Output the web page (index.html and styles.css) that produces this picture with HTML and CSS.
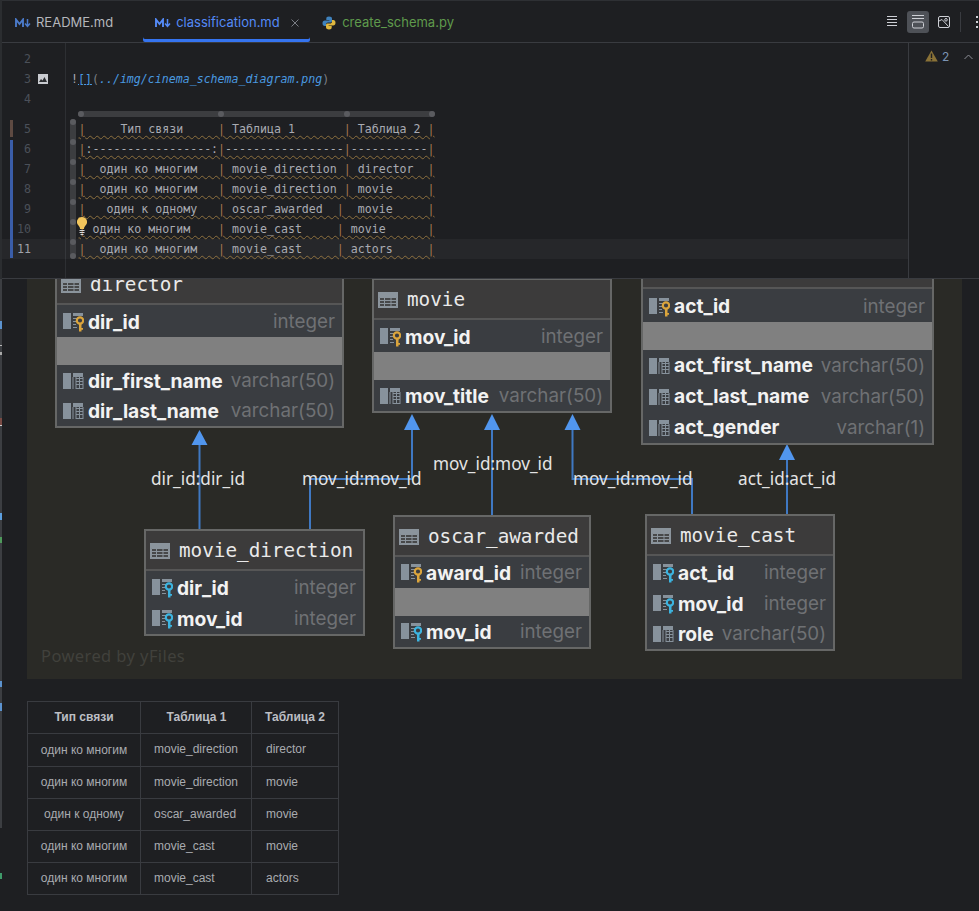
FILE: index.html
```html
<!DOCTYPE html>
<html lang="ru">
<head>
<meta charset="utf-8">
<title>classification.md</title>
<link rel="stylesheet" href="styles.css">
</head>
<body>
<svg class="defs" width="0" height="0" aria-hidden="true">
  <symbol id="i-md" viewBox="0 0 16 10">
    <path d="M1 9V1.500L4.500 6 8 1.500V9" fill="none" stroke="currentColor" stroke-width="1.900"/>
    <path d="M12.500 1v7M10 5.600l2.500 2.800L15 5.600" fill="none" stroke="currentColor" stroke-width="1.500"/>
  </symbol>
  <symbol id="i-table" viewBox="0 0 20 16">
    <rect width="20" height="16" fill="#8b949c"/>
    <path d="M1.500 5.500h17v9h-17zM1.500 8.500h17M1.500 11.500h17M6.500 5.500v9M13 5.500v9" fill="#3c3b3b" stroke="#8b949c" stroke-width="1" opacity=".85"/>
  </symbol>
  <symbol id="i-col" viewBox="0 0 21 17">
    <rect width="8" height="16" y="0" fill="#87929c"/>
    <path d="M10 0h10v4H10z" fill="#87929c"/>
    <path d="M13 5.500h7M13 8.500h7M13 11.500h7M13 15.500h7M13 4v12M16.500 4v12M20 4v12" stroke="#87929c" fill="none"/>
    <path d="M10 4v12" stroke="#87929c"/>
  </symbol>
  <symbol id="i-colkey" viewBox="0 0 21 19">
    <rect width="8" height="16" y="0" fill="#87929c"/>
    <path d="M10 0h10v3H10z" fill="#87929c"/>
    <path d="M10 5.500h4M10 8.500h3M10 11.500h3M10 14.500h4" stroke="#87929c" fill="none"/>
    <circle cx="17" cy="7.500" r="3.200" fill="none" stroke="currentColor" stroke-width="2.200"/>
    <path d="M16 10v8.500h2.500V16.800H20V15h-1.500v-5z" fill="currentColor"/>
  </symbol>
</svg>

<div class="app">
  <aside class="rail">
    <i class="tick tick-a"></i><i class="tick tick-b"></i><i class="tick tick-c"></i><i class="tick tick-d"></i>
    <i class="tick tick-e"></i><i class="tick tick-f"></i><i class="tick tick-g"></i><i class="tick tick-h"></i>
    <i class="tick tick-i"></i><i class="tick tick-j"></i>
  </aside>

  <main class="main">
    <header class="tabs">
      <div class="tab tab-reserve">
        <svg class="md-icon" width="16" height="10"><use href="#i-md"/></svg>
        <span>README.md</span>
      </div>
      <div class="tab tab-active">
        <svg class="md-icon" width="16" height="10"><use href="#i-md"/></svg>
        <span>classification.md</span>
        <svg class="close" width="8" height="8" viewBox="0 0 8 8"><path d="M.5.5l7 7M7.500.5l-7 7" stroke="#7a7d84" fill="none"/></svg>
      </div>
      <div class="tab tab-py">
        <svg width="14" height="14" viewBox="0 0 14 14">
          <path d="M7 .5C4.500.5 4.300 1.500 4.300 2.700V4H7.400v.6H2.800C1.400 4.600.5 5.500.5 7.200s.9 2.700 2.200 2.700H4V8.300c0-1.100.9-1.900 2-1.900h2.500c1 0 1.500-.7 1.500-1.600V2.700C10 1.400 9 .5 7 .5z" fill="#3f82bd"/>
          <path d="M7 13.500c2.500 0 2.700-1 2.700-2.200V10H6.600v-.6h4.600c1.400 0 2.300-.9 2.300-2.600s-.9-2.700-2.200-2.700H10v1.600c0 1.100-.9 1.900-2 1.900H5.500c-1 0-1.500.7-1.500 1.600v2.100c0 1.300 1 2.200 3 2.200z" fill="#e0b83f"/>
        </svg>
        <span>create_schema.py</span>
      </div>
      <div class="tools">
        <button class="tool" type="button" aria-label="Editor">
          <svg width="12" height="11" viewBox="0 0 12 11"><path d="M1 .5h10M1 3.500h10M1 6.500h10M1 9.500h10" stroke="#ced0d6" fill="none"/></svg>
        </button>
        <button class="tool tool-on" type="button" aria-label="Editor and preview">
          <svg width="14" height="14" viewBox="0 0 14 14"><path d="M1 .5h12M1 3.500h12" stroke="#ced0d6" fill="none"/><rect x="1.500" y="7" width="11" height="6" rx="1.500" fill="none" stroke="#ced0d6"/></svg>
        </button>
        <button class="tool" type="button" aria-label="Preview">
          <svg width="12" height="12" viewBox="0 0 12 12"><rect x=".5" y=".5" width="11" height="11" rx="1.500" fill="none" stroke="#ced0d6"/><circle cx="8" cy="3.800" r="1.300" fill="none" stroke="#ced0d6"/><path d="M1 5l3-1.500 6.500 7" fill="none" stroke="#ced0d6"/></svg>
        </button>
        <span class="tool-sep"></span>
        <svg class="dots" width="3" height="12" viewBox="0 0 3 12"><path d="M0 0h2v2H0zM0 5h2v2H0zM0 10h2v2H0z" fill="#ced0d6"/></svg>
      </div>
    </header>

    <section class="editor">
      <div class="code">
        <div class="line"><span class="num">2</span></div>
        <div class="line">
          <span class="num">3</span>
          <svg class="thumb" width="10" height="10" viewBox="0 0 10 10"><rect width="10" height="10" fill="#c9cbd0"/><path d="M1 8l2-3 1.500 1.500L6.500 3 9 8z" fill="#2b2d30"/></svg>
          <span class="src">!<span class="link">[]</span><span class="par">(</span><em class="url">../img/cinema_schema_diagram.png</em><span class="par">)</span></span>
        </div>
        <div class="line"><span class="num">4</span></div>
        <div class="inlay-gap">
          <div class="hbar">
            <i class="knob"></i><i class="knob knob-2"></i><i class="knob knob-3"></i><i class="knob knob-4"></i>
          </div>
        </div>
        <div class="line"><span class="num">5</span><span class="src tbl"><u><b>|</b>     Тип связи     <b>|</b> Таблица 1       <b>|</b> Таблица 2 <b>|</b></u></span></div>
        <div class="line"><span class="num">6</span><span class="src tbl"><u><b>|</b>:-----------------:<b>|</b>-----------------<b>|</b>-----------<b>|</b></u></span></div>
        <div class="line"><span class="num">7</span><span class="src tbl"><u><b>|</b>  один ко многим   <b>|</b> movie_direction <b>|</b> director  <b>|</b></u></span></div>
        <div class="line"><span class="num">8</span><span class="src tbl"><u><b>|</b>  один ко многим   <b>|</b> movie_direction <b>|</b> movie     <b>|</b></u></span></div>
        <div class="line"><span class="num">9</span><span class="src tbl"><u><b>|</b>   один к одному   <b>|</b> oscar_awarded  <b>|</b>  movie     <b>|</b></u></span></div>
        <div class="line"><span class="num">10</span><span class="src tbl"><u><b>|</b> один ко многим    <b>|</b> movie_cast     <b>|</b> movie      <b>|</b></u></span></div>
        <div class="line line-current"><span class="num">11</span><span class="src tbl"><u><b>|</b>  один ко многим   <b>|</b> movie_cast     <b>|</b> actors     <b>|</b></u></span></div>

        <div class="mark mark-mod"></div>
        <div class="mark mark-new"></div>
        <div class="vbar">
          <i class="vknob vk1"></i><i class="vknob vk2"></i><i class="vknob vk3"></i><i class="vknob vk4"></i>
          <i class="vknob vk5"></i><i class="vknob vk6"></i><i class="vknob vk7"></i><i class="vknob vk8"></i>
        </div>
        <svg class="bulb" width="10" height="19" viewBox="0 0 10 19">
          <path d="M5 0a5 5 0 0 0-3.500 8.600C2.600 9.800 3 11 3 12h4c0-1 .4-2.200 1.500-3.400A5 5 0 0 0 5 0z" fill="#f2c55c"/>
          <path d="M2.500 13.500h5M2.500 15.500h5M3.500 17.500h3" stroke="#d8d8d8" fill="none"/>
        </svg>
      </div>
      <aside class="inspect">
        <svg width="13" height="12" viewBox="0 0 13 12"><path d="M6.500.5L12.800 11.500H.2z" fill="#8a7237"/><path d="M5.800 3.500h1.400v4.500H5.800zM5.800 9h1.400v1.400H5.800z" fill="#1e1f22"/></svg>
        <span class="count">2</span>
        <svg class="chev" width="9" height="6" viewBox="0 0 9 6"><path d="M.5 5L4.500 1l4 4" fill="none" stroke="#8c8f96"/></svg>
      </aside>
    </section>

    <section class="preview">
      <div class="diagram">
        <svg class="edges" width="935" height="400" viewBox="0 0 935 400">
          <path d="M172.500 165V250M385 150V200H283V250M465 150V236M545.500 150V200H665V235M760 180V235" fill="none" stroke="#3f78c2" stroke-width="2"/>
          <path d="M172.500 151l8 15h-16zM385 135l8 16h-16zM465 135l8 16h-16zM545.500 135l8 16h-16zM760 165l8 16h-16z" fill="#5196ee"/>
        </svg>

        <span class="edge-label l-dir">dir_id:dir_id</span>
        <span class="edge-label l-mov1">mov_id:mov_id</span>
        <span class="edge-label l-mov2">mov_id:mov_id</span>
        <span class="edge-label l-mov3">mov_id:mov_id</span>
        <span class="edge-label l-act">act_id:act_id</span>

        <article class="node n-director">
          <div class="head"><svg width="20" height="16"><use href="#i-table"/></svg><span>director</span></div>
          <div class="rows">
            <div class="row"><svg class="gold" width="21" height="19"><use href="#i-colkey"/></svg><strong>dir_id</strong><span>integer</span></div>
          </div>
          <div class="gap"></div>
          <div class="rows">
            <div class="row"><svg width="21" height="17"><use href="#i-col"/></svg><strong>dir_first_name</strong><span>varchar(50)</span></div>
            <div class="row"><svg width="21" height="17"><use href="#i-col"/></svg><strong>dir_last_name</strong><span>varchar(50)</span></div>
          </div>
        </article>

        <article class="node n-movie">
          <div class="head"><svg width="20" height="16"><use href="#i-table"/></svg><span>movie</span></div>
          <div class="rows">
            <div class="row"><svg class="gold" width="21" height="19"><use href="#i-colkey"/></svg><strong>mov_id</strong><span>integer</span></div>
          </div>
          <div class="gap"></div>
          <div class="rows">
            <div class="row"><svg width="21" height="17"><use href="#i-col"/></svg><strong>mov_title</strong><span>varchar(50)</span></div>
          </div>
        </article>

        <article class="node n-actors">
          <div class="head"></div>
          <div class="rows">
            <div class="row"><svg class="gold" width="21" height="19"><use href="#i-colkey"/></svg><strong>act_id</strong><span>integer</span></div>
          </div>
          <div class="gap"></div>
          <div class="rows">
            <div class="row"><svg width="21" height="17"><use href="#i-col"/></svg><strong>act_first_name</strong><span>varchar(50)</span></div>
            <div class="row"><svg width="21" height="17"><use href="#i-col"/></svg><strong>act_last_name</strong><span>varchar(50)</span></div>
            <div class="row"><svg width="21" height="17"><use href="#i-col"/></svg><strong>act_gender</strong><span>varchar(1)</span></div>
          </div>
        </article>

        <article class="node n-direction">
          <div class="head"><svg width="20" height="16"><use href="#i-table"/></svg><span>movie_direction</span></div>
          <div class="rows">
            <div class="row"><svg class="cyan" width="21" height="19"><use href="#i-colkey"/></svg><strong>dir_id</strong><span>integer</span></div>
            <div class="row"><svg class="cyan" width="21" height="19"><use href="#i-colkey"/></svg><strong>mov_id</strong><span>integer</span></div>
          </div>
        </article>

        <article class="node n-oscar">
          <div class="head"><svg width="20" height="16"><use href="#i-table"/></svg><span>oscar_awarded</span></div>
          <div class="rows">
            <div class="row"><svg class="gold" width="21" height="19"><use href="#i-colkey"/></svg><strong>award_id</strong><span>integer</span></div>
          </div>
          <div class="gap"></div>
          <div class="rows">
            <div class="row"><svg class="cyan" width="21" height="19"><use href="#i-colkey"/></svg><strong>mov_id</strong><span>integer</span></div>
          </div>
        </article>

        <article class="node n-cast">
          <div class="head"><svg width="20" height="16"><use href="#i-table"/></svg><span>movie_cast</span></div>
          <div class="rows">
            <div class="row"><svg class="cyan" width="21" height="19"><use href="#i-colkey"/></svg><strong>act_id</strong><span>integer</span></div>
            <div class="row"><svg class="cyan" width="21" height="19"><use href="#i-colkey"/></svg><strong>mov_id</strong><span>integer</span></div>
            <div class="row"><svg width="21" height="17"><use href="#i-col"/></svg><strong>role</strong><span>varchar(50)</span></div>
          </div>
        </article>

        <span class="powered">Powered by yFiles</span>
      </div>

      <table class="rel">
        <thead>
          <tr><th>Тип связи</th><th>Таблица 1</th><th>Таблица 2</th></tr>
        </thead>
        <tbody>
          <tr class="tall"><td>один ко многим</td><td>movie_direction</td><td>director</td></tr>
          <tr><td>один ко многим</td><td>movie_direction</td><td>movie</td></tr>
          <tr><td>один к одному</td><td>oscar_awarded</td><td>movie</td></tr>
          <tr><td>один ко многим</td><td>movie_cast</td><td>movie</td></tr>
          <tr><td>один ко многим</td><td>movie_cast</td><td>actors</td></tr>
        </tbody>
      </table>
    </section>
  </main>
</div>
</body>
</html>
```

FILE: styles.css
```css
* { box-sizing: border-box; }

html, body {
  margin: 0;
  height: 911px;
  overflow: hidden;
  background: #1e1f22;
}

.defs { position: absolute; }

.app {
  display: flex;
  height: 911px;
  width: 979px;
  overflow: hidden;
}

/* left rail sliver */
.rail {
  position: relative;
  flex: none;
  width: 2px;
  background: linear-gradient(#2b2d30 0 279px, #3c3e42 279px 828px, #1e1f22 828px);
}
.tick { position: absolute; left: 0; width: 2px; display: block; }
.tick-a { top: 321px; height: 8px; background: #5c93cf; }
.tick-b { top: 345px; height: 1px; background: #b8b8b8; }
.tick-c { top: 352px; height: 3px; background: #a9a9a9; }
.tick-d { top: 418px; height: 7px; background: #7a4a44; }
.tick-e { top: 425px; height: 1px; background: #d0d0d0; }
.tick-f { top: 513px; height: 7px; background: #5c9fe0; }
.tick-g { top: 537px; height: 6px; background: #4f9a5c; }
.tick-h { top: 681px; height: 6px; background: #5c93cf; }
.tick-i { top: 703px; height: 8px; background: #5c93cf; }
.tick-j { top: 873px; height: 6px; background: #3f9a6a; }

.main {
  flex: 1;
  min-width: 0;
  display: flex;
  flex-direction: column;
}

/* tabs */
.tabs {
  display: flex;
  align-items: stretch;
  height: 43px;
  flex: none;
  padding-left: 1px;
  border-top: 1px solid #2e3034;
  border-bottom: 1px solid #393b40;
  font: 13px/1 Inter, "Liberation Sans", sans-serif;
  color: #b4b6bc;
}
.tab {
  display: flex;
  align-items: center;
  gap: 5px;
  padding: 2px 12px 0;
  white-space: nowrap;
}
.tab-reserve { margin-right: 18px; }
.md-icon { color: #4b7ac9; flex: none; }
.tab-active {
  color: #548af7;
  width: 167px;
  box-shadow: inset 0 -3px 0 #3574f0;
  border-radius: 0 0 2px 2px;
}
.tab-active .md-icon { color: #548af7; }
.close { margin-left: 6px; flex: none; }
.tab-py { color: #5f9a4c; gap: 6px; }

.tools {
  margin-left: auto;
  display: flex;
  align-items: center;
  gap: 4px;
}
.tool {
  width: 22px;
  height: 22px;
  padding: 0;
  border: 0;
  background: none;
  border-radius: 3px;
  display: flex;
  align-items: center;
  justify-content: center;
}
.tool-on { background: #4e5157; }
.tool-sep { width: 1px; height: 20px; background: #393b40; margin-left: 1px; }
.dots { margin-left: 11px; flex: none; }

/* editor */
.editor {
  display: flex;
  height: 236px;
  flex: none;
  overflow: hidden;
  background: #1e1f22;
  border-bottom: 1px solid #393b40;
}
.code {
  position: relative;
  width: 907px;
  flex: none;
  padding-top: 6px;
  border-right: 1px solid #393b40;
  background: linear-gradient(#2d2f33, #2d2f33) 63px 0 / 1px 100% no-repeat;
}
.line {
  display: flex;
  align-items: center;
  height: 20px;
  padding-left: 1px;
  font: 11.6px/20px "DejaVu Sans Mono", "Liberation Mono", monospace;
  white-space: pre;
  color: #a9abb2;
}
.line-current { background: rgba(255, 255, 255, .04); }
.num {
  flex: none;
  width: 28px;
  text-align: right;
  color: #4b5059;
}
.line-current .num { color: #a1a3ab; }
.thumb { position: absolute; left: 36px; }
.src { margin-left: 40px; }
.tbl { margin-left: 47.5px; }
.link { color: #4a9ae0; text-decoration: underline; }
.par { color: #7d8087; }
.url { color: #4a9ae0; }
u {
  text-decoration: underline wavy #8c6f3e 1px;
  text-underline-offset: 2px;
}
b { font-weight: 400; color: #a5764f; }

.inlay-gap {
  height: 30px;
  margin-top: -20px;
  padding: 22px 0 0 76px;
}
.hbar {
  position: relative;
  width: 357px;
  height: 6px;
  border-radius: 3px;
  background: #3c3d40;
}
.knob {
  position: absolute;
  top: 0;
  left: 0;
  width: 6px;
  height: 6px;
  border-radius: 50%;
  background: #5a5b5f;
}
.knob-2 { left: 140px; }
.knob-3 { left: 266px; }
.knob-4 { left: 351px; }

.mark { position: absolute; left: 8px; width: 3px; }
.mark-mod { top: 77px; height: 17px; background: #5e4a42; }
.mark-new { top: 97px; height: 118px; background: #3a5da8; }

.vbar {
  position: absolute;
  left: 68px;
  top: 76px;
  width: 6px;
  height: 140px;
  border-radius: 3px;
  background: #3c3d40;
}
.vknob {
  position: absolute;
  left: 0;
  width: 6px;
  height: 6px;
  border-radius: 50%;
  background: #5a5b5f;
}
.vk1 { top: 0; }
.vk2 { top: 20px; }
.vk3 { top: 40px; }
.vk4 { top: 60px; }
.vk5 { top: 80px; }
.vk6 { top: 100px; }
.vk7 { top: 120px; }
.vk8 { top: 134px; }

.bulb { position: absolute; left: 75px; top: 174px; }

.inspect {
  flex: 1;
  display: flex;
  align-items: flex-start;
  padding: 7px 0 0 16px;
  gap: 4px;
  font: 12px/14px Inter, "Liberation Sans", sans-serif;
  color: #7c94b4;
}
.chev { margin: 4px 0 0 11px; }

/* preview */
.preview {
  flex: 1;
  min-height: 0;
  padding-left: 25px;
}
.diagram {
  position: relative;
  width: 935px;
  height: 400px;
  overflow: hidden;
  background: #2a2a26;
}
.edges { position: absolute; left: 0; top: 0; }
.edge-label {
  position: absolute;
  font: 17.2px/20px "Noto Sans", "Open Sans", sans-serif;
  color: #e4e4e4;
  white-space: nowrap;
  z-index: 1;
}
.l-dir { left: 124px; top: 190px; }
.l-mov1 { left: 275px; top: 190px; }
.l-mov2 { left: 406px; top: 175px; }
.l-mov3 { left: 546px; top: 190px; }
.l-act { left: 711px; top: 190px; }

.node {
  position: absolute;
  border: 2px solid #666766;
  background: #3a3d41;
}
.n-director { left: 28px; top: -16px; width: 289px; }
.n-movie { left: 345px; top: -1px; width: 240px; }
.n-actors { left: 614px; top: -32px; width: 293px; }
.n-direction { left: 117px; top: 250px; width: 221px; }
.n-oscar { left: 366px; top: 236px; width: 198px; }
.n-cast { left: 618px; top: 235px; width: 190px; }

.head {
  display: flex;
  align-items: center;
  gap: 9.5px;
  height: 40px;
  padding: 2px 0 0 3.500px;
  background: #3c3b3b;
  border-bottom: 2px solid #565656;
  font: 19.3px/1 "DejaVu Sans Mono", "Liberation Mono", monospace;
  color: #eaeaea;
  white-space: nowrap;
}
.head svg { flex: none; }
.rows { padding-top: 1.5px; }
.gap + .rows { padding-top: 0; }
.n-oscar .rows { padding-top: .5px; }
.n-oscar .gap + .rows { padding-top: 0; }
.gap { height: 28px; background: #808080; }
.row {
  display: flex;
  align-items: center;
  height: 30.5px;
  padding: 2px 7px 0 6px;
  font: 18.8px/1 Inter, "Liberation Sans", sans-serif;
  color: #6f7174;
  white-space: nowrap;
}
.n-actors .row { height: 31px; }
.row svg { flex: none; margin-right: 4px; }
.row strong { font-size: 19.200px; font-weight: 700; color: #f2f2f2; margin-right: auto; }
.gold { color: #dba53c; }
.cyan { color: #3cb4e0; }

.powered {
  position: absolute;
  left: 14px;
  top: 367px;
  font: 16.5px/20px "Noto Sans", sans-serif;
  letter-spacing: .4px;
  color: #41413c;
}

.rel {
  margin-top: 22px;
  border-collapse: collapse;
  font: 12px/1.2 "Liberation Sans", Arial, sans-serif;
  color: #a9abb0;
  table-layout: fixed;
  width: 312px;
}
.rel th, .rel td {
  border: 1px solid #393b40;
  height: 32px;
  padding: 0 13px;
  text-align: left;
}
.rel .tall td { height: 33px; padding-bottom: 1px; }
.rel th { color: #bcbec4; font-weight: 700; }
.rel th:first-child, .rel td:first-child { text-align: center; width: 113px; padding: 0; }
.rel td:last-child { padding-left: 14px; }
.rel th:nth-child(2) { width: 111px; text-align: center; padding: 0 0 0 1px; }
.rel th:nth-child(3) { text-align: center; padding: 0; }
```
